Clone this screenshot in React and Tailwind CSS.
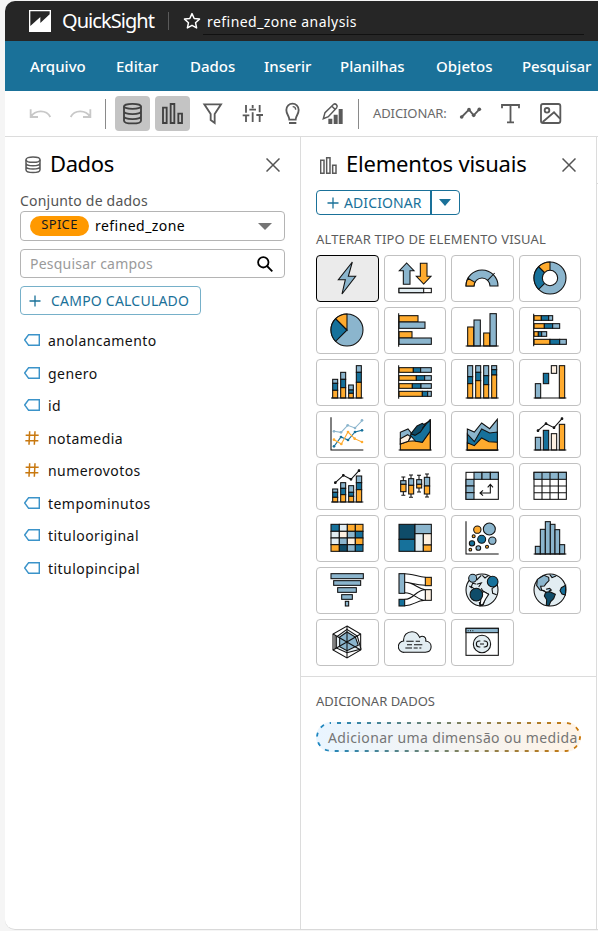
import React from "react";

const L = "#8bb5cd";
const M = "#16719b";
const O = "#ffab2e";
const P = "#e2edf2";
const C = "#fdf0e1";
const D = "#0f4c69";
const K = "#111";

/* Rectangles given as [x, y, width, height, fill] */
const Rects = ({ r }) => r.map((a, i) => <rect key={i} x={a[0]} y={a[1]} width={a[2]} height={a[3]} fill={a[4]} />);
/* Circles given as [cx, cy, r, fill] */
const Dots = ({ c, ...p }) => c.map((a, i) => <circle key={i} cx={a[0]} cy={a[1]} r={a[2]} fill={a[3]} {...p} />);

const visuals = [
  { id: "auto", vb: "60 33 102 102", art: <path d="M127 36L85 89h21l-10 43 41-53h-22z" fill={L} /> },
  {
    id: "kpi", vb: "264 33 102 102", art: (
      <>
        <path d="M290 39l22 23h-12v41h-20V62h-12z" fill={L} />
        <path d="M331 40h20v39h12l-22 23-22-23h12z" fill={O} />
        <rect x="267" y="115" width="97" height="13" fill="#fff" />
        <rect x="267" y="115" width="74" height="13" fill={P} />
      </>
    ),
  },
  {
    id: "gauge", vb: "57 33 102 102", art: (
      <>
        <path d="M60 108A48 48 0 0 1 156 108H132A24 24 0 0 0 84 108Z" fill={L} />
        <path d="M60 108A48 48 0 0 1 66 85L87 97A24 24 0 0 0 84 108Z" fill={O} />
        <path d="M124 92l22-23" />
      </>
    ),
  },
  {
    id: "donut", vb: "261 33 102 102", art: (
      <>
        <circle cx="312" cy="84" r="48" fill={L} />
        <path d="M312 84L278 118A48 48 0 0 1 278 50Z" fill={M} />
        <path d="M312 84L278 50A48 48 0 0 1 312 36Z" fill={O} />
        <circle cx="312" cy="84" r="23" fill="#fff" />
      </>
    ),
  },
  {
    id: "pie", vb: "60 189 102 102", art: (
      <>
        <circle cx="111" cy="240" r="48" fill={L} />
        <path d="M111 240L77 274A48 48 0 0 1 77 206Z" fill={M} />
        <path d="M111 240L77 206A48 48 0 0 1 111 192Z" fill={O} />
      </>
    ),
  },
  {
    id: "hbar", vb: "264 189 102 102", art: (
      <>
        <Rects r={[[267, 197, 57, 19, O], [267, 216, 78, 19, L], [267, 245, 39, 19, O], [267, 264, 97, 19, L]]} />
        <path d="M266 190v100" />
      </>
    ),
  },
  {
    id: "vbar", vb: "57 189 102 102", art: (
      <>
        <Rects r={[[65, 231, 18, 57, O], [84, 210, 19, 78, L], [113, 249, 18, 39, O], [132, 191, 19, 97, L]]} />
        <path d="M59 288h99" />
      </>
    ),
  },
  {
    id: "hstack", vb: "261 189 102 102", art: (
      <>
        <Rects r={[
          [264, 197, 22, 14, O], [286, 197, 22, 14, M], [308, 197, 12, 14, L],
          [264, 221, 31, 14, O], [295, 221, 25, 14, M], [320, 221, 21, 14, L],
          [264, 245, 13, 14, O], [277, 245, 10, 14, M], [287, 245, 15, 14, L],
          [264, 268, 48, 15, O], [312, 268, 29, 15, M], [341, 268, 20, 15, L]]} />
        <path d="M263 191v98" />
      </>
    ),
  },
  {
    id: "vstack", vb: "60 345 102 102", art: (
      <>
        <Rects r={[
          [68, 388, 15, 12, L], [68, 400, 15, 21, M], [68, 421, 15, 23, O],
          [92, 367, 15, 21, L], [92, 388, 15, 25, M], [92, 413, 15, 31, O],
          [116, 405, 14, 15, L], [116, 420, 14, 10, M], [116, 430, 14, 14, O],
          [139, 347, 15, 20, L], [139, 367, 15, 30, M], [139, 397, 15, 47, O]]} />
        <path d="M63 444h97" />
      </>
    ),
  },
  {
    id: "hstack100", vb: "264 345 102 102", art: (
      <>
        <Rects r={[
          [267, 353, 43, 14, O], [310, 353, 22, 14, M], [332, 353, 32, 14, L],
          [267, 377, 52, 14, O], [319, 377, 25, 14, M], [344, 377, 20, 14, L],
          [267, 401, 40, 14, O], [307, 401, 26, 14, M], [333, 401, 31, 14, L],
          [267, 424, 70, 15, O], [337, 424, 16, 15, M], [353, 424, 11, 15, L]]} />
        <path d="M266 346v100" />
      </>
    ),
  },
  {
    id: "vstack100", vb: "57 345 102 102", art: (
      <>
        <Rects r={[
          [65, 347, 15, 33, L], [65, 380, 15, 21, M], [65, 401, 15, 43, O],
          [89, 347, 15, 20, L], [89, 367, 15, 25, M], [89, 392, 15, 52, O],
          [113, 347, 15, 30, L], [113, 377, 15, 27, M], [113, 404, 15, 40, O],
          [137, 347, 15, 12, L], [137, 359, 15, 16, M], [137, 375, 15, 69, O]]} />
        <path d="M59 444h99" />
      </>
    ),
  },
  {
    id: "waterfall", vb: "261 345 102 102", art: (
      <>
        <Rects r={[[268, 401, 16, 43, L], [292, 370, 16, 31, M], [316, 347, 16, 23, C], [340, 347, 16, 97, O]]} />
        <path d="M263 444h98" />
      </>
    ),
  },
  {
    id: "line", vb: "60 33 102 102", art: (
      <>
        <path d="M63 34v98h97" />
        <path d="M72 76l21 3 20-21 22 8 22-23" stroke={L} />
        <path d="M72 121l21-28 21 9 21-24 21-5" stroke={M} />
        <path d="M72 101l22 13 20-36 20 20 22 10" stroke={O} />
        <Dots stroke="none" c={[[72, 76, 4, L], [93, 79, 4, L], [113, 58, 4, L], [135, 66, 4, L], [156, 43, 4, L],
          [72, 121, 4, M], [93, 93, 4, M], [114, 102, 4, M], [135, 78, 4, M], [156, 73, 4, M],
          [72, 101, 4, O], [94, 114, 4, O], [114, 78, 4, O], [134, 98, 4, O], [156, 108, 4, O]]} />
      </>
    ),
  },
  {
    id: "area", vb: "264 33 102 102", art: (
      <>
        <path d="M271 114l24-8 22-2 20 4 24-33v57h-90z" fill={O} />
        <path d="M271 79l23-10 14 17-13 18-24 10z" fill={L} />
        <path d="M271 98l22-12 8 6-6 14-24 8z" fill={C} />
        <path d="M301 88l16-21 20-9 24-14v31l-24 34-20-3z" fill={M} />
        <path d="M303 83l18-23 16-8 8 6-14 20-16 10z" fill={D} />
        <path d="M361 39v93M266 132h99M337 67l24-27" />
      </>
    ),
  },
  {
    id: "stackarea", vb: "57 33 102 102", art: (
      <>
        <path d="M64 69l21 9 22-27 24 17 23-28v92H64z" fill={L} />
        <path d="M64 84l21 23 22-38 24 12 23-3v54H64z" fill={M} />
        <path d="M64 110l21 9 22-23 22 11 25 2v23H64z" fill={O} />
        <path d="M59 132h99" />
      </>
    ),
  },
  {
    id: "combo", vb: "261 33 102 102", art: (
      <>
        <Rects r={[[268, 94, 16, 38, L], [292, 73, 16, 59, M], [316, 83, 16, 49, C], [340, 55, 16, 77, O]]} />
        <path d="M263 132h98M276 74l24-21 24 12 24-27" />
        <Dots c={[[276, 74, 2.5, K], [300, 53, 2.5, K], [324, 65, 2.5, K], [348, 38, 2.5, K]]} />
      </>
    ),
  },
  {
    id: "combostack", vb: "60 189 102 102", art: (
      <>
        <Rects r={[
          [68, 249, 15, 10, L], [68, 259, 15, 15, M], [68, 274, 15, 14, O],
          [92, 230, 15, 17, L], [92, 247, 15, 19, M], [92, 266, 15, 22, O],
          [116, 239, 15, 20, L], [116, 259, 15, 12, M], [116, 271, 15, 17, O],
          [139, 210, 16, 20, L], [139, 230, 16, 21, M], [139, 251, 16, 37, O]]} />
        <path d="M63 288h97M76 230l24-22 23 12 24-26" />
        <Dots c={[[76, 230, 2.5, K], [100, 208, 2.5, K], [123, 220, 2.5, K], [147, 194, 2.5, K]]} />
      </>
    ),
  },
  {
    id: "box", vb: "264 189 102 102", art: (
      <>
        <path d="M280 213v55M274 213h12M274 268h12M303 207v67M297 207h12M297 274h12M327 208v50M321 208h12M321 258h12M351 204v69M345 204h12M345 273h12" />
        <Rects r={[
          [272, 224, 16, 11, L], [272, 235, 16, 22, O],
          [296, 218, 15, 20, L], [296, 238, 15, 26, O],
          [320, 221, 15, 14, L], [320, 235, 15, 11, O],
          [343, 214, 16, 26, L], [343, 240, 16, 24, O]]} />
      </>
    ),
  },
  {
    id: "pivot", vb: "57 189 102 102", art: (
      <>
        <rect x="60" y="199" width="97" height="81" fill="#fff" />
        <Rects r={[[84, 199, 24, 21, L], [108, 199, 25, 21, L], [133, 199, 24, 21, L], [60, 220, 24, 20, L], [60, 240, 24, 20, L], [60, 260, 24, 20, L]]} />
        <path d="M133 237v24h-30M111 253l-9 8 9 8M125 244l8-9 8 9" />
      </>
    ),
  },
  {
    id: "table", vb: "261 189 102 102", art: (
      <>
        <rect x="264" y="199" width="97" height="81" fill="#fff" />
        <rect x="264" y="199" width="97" height="21" fill={L} />
        <path d="M264 240h97M264 260h97M288 199v81M312 199v81M337 199v81" />
      </>
    ),
  },
  {
    id: "heat", vb: "60 345 102 102", art: (
      <Rects r={[
        [63, 355, 25, 21, M], [88, 355, 24, 21, P], [112, 355, 24, 21, O], [136, 355, 23, 21, O],
        [63, 376, 25, 20, P], [88, 376, 24, 20, C], [112, 376, 24, 20, L], [136, 376, 23, 20, M],
        [63, 396, 25, 20, P], [88, 396, 24, 20, L], [112, 396, 24, 20, C], [136, 396, 23, 20, O],
        [63, 416, 25, 20, O], [88, 416, 24, 20, D], [112, 416, 24, 20, L], [136, 416, 23, 20, M]]} />
    ),
  },
  {
    id: "tree", vb: "264 345 102 102", art: (
      <Rects r={[[267, 355, 48, 45, D], [267, 400, 48, 36, M], [315, 355, 49, 28, L], [315, 383, 25, 53, P], [340, 383, 24, 34, C], [340, 417, 24, 19, O]]} />
    ),
  },
  {
    id: "scatter", vb: "57 345 102 102", art: (
      <>
        <path d="M60 346v98h98" />
        <Dots c={[[94, 371, 11, O], [130, 369, 18, L], [83, 391, 4.5, O], [107, 400, 12, M], [139, 404, 11, L], [78, 412, 8, M], [97, 426, 7, L], [123, 422, 4.5, O], [73, 431, 4, O]]} />
      </>
    ),
  },
  {
    id: "hist", vb: "261 345 102 102", art: (
      <>
        <Rects r={[[268, 421, 15, 23, L], [283, 370, 15, 74, L], [298, 347, 15, 97, L], [313, 355, 14, 89, L], [327, 371, 14, 73, L], [341, 416, 15, 28, L]]} />
        <path d="M263 444h98" />
      </>
    ),
  },
  {
    id: "funnel", vb: "60 39 102 102", art: <Rects r={[[63, 41, 97, 15, L], [71, 62, 81, 14, L], [83, 83, 56, 14, L], [95, 104, 32, 14, L], [106, 124, 10, 14, L]]} />,
  },
  {
    id: "sankey", vb: "264 39 102 102", art: (
      <>
        <path d="M284 41c22 0 40 9 62 11M284 67c20 0 30 9 62 9M284 67c30 0 38 20 62 22M284 98c30 0 38 23 62 23M284 118c30 0 32-29 62-29M284 137c30 0 30-15 62-16" />
        <Rects r={[[267, 41, 17, 59, L], [267, 118, 17, 20, M], [346, 52, 18, 25, O], [346, 89, 18, 32, C]]} />
      </>
    ),
  },
  {
    id: "mappoints", vb: "57 39 102 102", art: (
      <>
        <circle cx="108" cy="90" r="48" fill={P} />
        <path d="M92 60l14-14M109 46l8 8 10-7M84 86l-8-6 4-10 10 2M92 73l14-4-8 12M110 93l16 9-8 12-6 20-10 4-2-12M110 93l-4-8M152 76l-14 10 2 14 12 4M70 78l8 6M128 102l-10-4" fill="none" />
        <path d="M112 94l16 9-9 14-10 19-6-3 2-24z" fill="#fff" />
        <Dots c={[[80, 55, 12, L], [140, 65, 16, M], [91, 104, 19, D]]} />
      </>
    ),
  },
  {
    id: "map", vb: "261 39 102 102", art: (
      <>
        <circle cx="312" cy="90" r="48" fill={P} />
        <path d="M274 58l20-12 14 6 1 10-9 9-5 7-11 1 3 11 9 3-14-3-10-13z" fill={L} />
        <path d="M299 97l12-2 17 8-5 13-9 9-5 12-8-1 1-17-7-11z" fill={D} />
        <path d="M359 76l-13 7-4 9 6 10 10 3z" fill={M} />
        <path d="M311 43l7 10 12-5M300 88l11-3 5 5-7 3M290 91l13 7" fill={L} />
      </>
    ),
  },
  {
    id: "radar", vb: "60 195 102 102", art: (
      <>
        <path d="M111 198l41 24v48l-41 24-42-24v-48z" fill="#fff" />
        <path d="M111 208l31 20 11 39-42 11-32-14v-33z" fill={P} />
        <path d="M111 216l25 15 9 25-34 16-22-12v-29z" fill={L} />
        <path d="M111 198v96M69 222l83 48M152 222l-83 48M75 225v42" />
      </>
    ),
  },
  {
    id: "cloud", vb: "264 195 102 102", art: (
      <>
        <path d="M283 277a17 17 0 0 1-2-34c-2-18 11-28 25-28 12 0 19 7 23 17 9-8 21 0 18 11 22 2 22 33-1 34z" fill={P} />
        <path d="M289 244h22M317 244h13M291 254h15M312 254h25M286 264h20M311 264h12M328 264h6" />
      </>
    ),
  },
  {
    id: "custom", vb: "57 195 102 102", art: (
      <>
        <rect x="60" y="205" width="97" height="81" fill="#fff" />
        <rect x="60" y="205" width="97" height="13" fill={L} />
        <path d="M65 212h3M72 212h3M79 212h3" />
        <circle cx="108" cy="252" r="26" fill={P} />
        <path d="M103 243h-3a9 9 0 0 0 0 18h3M113 243h3a9 9 0 0 1 0 18h-3M102 252h12" />
      </>
    ),
  },
];

const Tile = ({ v, first }) => (
  <button className={`flex h-[47px] items-center justify-center rounded-[4px] border ${first ? "border-black bg-[#ebebeb]" : "border-[#c1c1c1] bg-white"}`}>
    <svg viewBox={v.vb} className="mb-px h-[34px] w-[34px] shrink-0" fill="none" stroke={K} strokeWidth="3.2">{v.art}</svg>
  </button>
);

const Tool = ({ vb, active, muted, children }) => (
  <button className={`h-[35px] w-[35px] shrink-0 rounded-[4px] ${active ? "bg-[#c4c4c4] text-[#404040]" : muted ? "text-[#c8c8c8]" : "text-[#5a5a5a]"}`}>
    <svg viewBox={vb} className="h-[35px] w-[35px]" fill="none" stroke="currentColor" strokeWidth="5.5">{children}</svg>
  </button>
);

const Close = () => (
  <svg viewBox="0 0 14 14" className="h-[14px] w-[14px]" stroke="#545454" strokeWidth="1.5"><path d="M.5 .5l13 13M13.5 .5l-13 13" /></svg>
);

const Plus = () => (
  <svg viewBox="0 0 12 12" className="h-[12px] w-[12px] shrink-0" stroke="currentColor" strokeWidth="1.3"><path d="M6 .5v11M.5 6h11" /></svg>
);

const menu = [
  ["Arquivo", "w-[86px]"], ["Editar", "w-[74px]"], ["Dados", "w-[74px]"], ["Inserir", "w-[76px]"],
  ["Planilhas", "w-[96px]"], ["Objetos", "w-[86px] tracking-[0.1px]"], ["Pesquisar", "w-[76px] tracking-[-0.1px]"],
];

const fields = [
  ["anolancamento", 0], ["genero", 0], ["id", 0], ["notamedia", 1],
  ["numerovotos", 1], ["tempominutos", 0], ["titulooriginal", 0], ["titulopincipal", 0],
];

export default function App() {
  return (
    <div className="h-[931px] w-[598px] overflow-hidden bg-[#f5f5f5] pl-[5px] pt-px font-['Noto_Sans',sans-serif]">
      <div className="flex h-[929px] flex-col overflow-hidden rounded-l-[10px] border-b border-[#d9d9d9] bg-white">
        <header className="flex h-[40px] shrink-0 items-center bg-[#262626] pl-[24px] text-white">
          <svg viewBox="0 0 66 66" className="h-[22px] w-[22px]">
            <path d="M0 0h66v66H0z" fill="#fff" />
            <path d="M4 4h58v9L34 39V21L4 48z" fill="#262626" />
          </svg>
          <span className="ml-[11px] w-[95px] whitespace-nowrap text-[20px] leading-[42px] tracking-[-0.95px]">QuickSight</span>
          <span className="ml-[11px] h-[18px] w-px bg-[#5a5a5a]" />
          <svg viewBox="0 0 18 18" className="ml-[14px] h-[18px] w-[18px]" fill="none" stroke="#fff" strokeWidth="1.5" strokeLinejoin="round">
            <path d="M9 1.6l2.2 4.9 5.3.6-4 3.6 1.1 5.2L9 13.3l-4.6 2.6 1.1-5.2-4-3.6 5.3-.6z" />
          </svg>
          <div className="ml-[2px] flex h-[40px] w-[381px] flex-col pt-[6px]">
            <div className="h-[28px] border-b border-[#111] pl-[4px]">
              <span className="block whitespace-nowrap text-[14px] leading-[29px] tracking-[0.45px]">refined_zone analysis</span>
            </div>
          </div>
        </header>

        <nav className="flex h-[50px] shrink-0 items-center bg-[#1a7199] pl-[25px] text-[15px] font-medium text-white">
          {menu.map(([t, w]) => <span key={t} className={`${w} shrink-0 whitespace-nowrap leading-[51px]`}>{t}</span>)}
        </nav>

        <div className="flex h-[46px] shrink-0 items-center border-b border-[#dcdcdc] pl-[18px]">
          <Tool vb="69 288 105 105" muted><path d="M92 328v23h22M93 350c12-20 46-22 58 1" /></Tool>
          <div className="w-[5px]" />
          <Tool vb="189 288 105 105" muted><path d="M271 328v23h-22M270 350c-12-20-46-22-58 1" /></Tool>
          <span className="ml-[7px] mr-[9px] h-[30px] w-px bg-[#8a8a8a]" />
          <Tool vb="345 288 105 105" active>
            <ellipse cx="397.500" cy="319" rx="25.500" ry="7.500" />
            <path d="M372 319v43c0 11 51 11 51 0v-43M372 334c0 11 51 11 51 0M372 349c0 11 51 11 51 0" />
          </Tool>
          <div className="w-[5px]" />
          <Tool vb="465 288 105 105" active><path d="M489 323h11v46h-11zM512 312h11v57h-11zM535 341h11v28h-11z" /></Tool>
          <div className="w-[5px]" />
          <Tool vb="585 288 105 105"><path d="M613 313h50l-19 29v27l-12-9v-18z" /></Tool>
          <div className="w-[5px]" />
          <Tool vb="705 288 105 105"><path d="M738 315v23M728 346h20M738 346v20M758 315v10M748 329h20M758 337v29M779 315v22M769 345h20M779 345v21" /></Tool>
          <div className="w-[5px]" />
          <Tool vb="825 288 105 105">
            <path d="M868 359c0-12-9-15-9-29 0-12 9-19 18.500-19s18.500 7 18.500 19c0 14-9 17-9 29zM867 369h22" />
            <path d="M878 320c6 0 9 4 9 9" strokeWidth="4" />
          </Tool>
          <div className="w-[5px]" />
          <Tool vb="51 288 105 105">
            <path d="M76 356l5-18 26-25c5-4 14 3 9 10l-25 27zM101 318l10 10" strokeWidth="4.500" />
            <path d="M91 356h12v16H91zM107 344h12v28h-12zM122 327h12v45h-12z" fill="currentColor" stroke="none" />
          </Tool>
          <span className="ml-[8px] mr-[14px] h-[30px] w-px bg-[#8a8a8a]" />
          <span className="w-[80px] whitespace-nowrap text-[13px] tracking-[-0.1px] text-[#6a6a6a]">ADICIONAR:</span>
          <Tool vb="465 288 105 105">
            <path d="M491 351l22-22 14 17 17-18" />
            <Dots stroke="none" c={[[491, 351, 5.5, "currentColor"], [513, 329, 5.5, "currentColor"], [527, 346, 5.5, "currentColor"], [544, 328, 5.5, "currentColor"]]} />
          </Tool>
          <div className="w-[5px]" />
          <Tool vb="585 288 105 105"><path d="M612 325v-10h51v10M637.500 315v51M627 367h21" /></Tool>
          <div className="w-[5px]" />
          <Tool vb="705 288 105 105">
            <rect x="729" y="312" width="58" height="57" rx="6" />
            <circle cx="747" cy="331" r="7" />
            <path d="M734 366l34-29 18 19" />
          </Tool>
        </div>

        <div className="flex min-h-0 flex-1">
          <section className="flex w-[295px] shrink-0 flex-col px-[15px]">
            <div className="flex h-[56px] items-center pl-[5px] pr-[5px]">
              <svg viewBox="0 0 48 54" className="h-[18px] w-[16px]" fill="none" stroke="#5a5a5a" strokeWidth="4.500">
                <ellipse cx="24" cy="11" rx="21" ry="8" />
                <path d="M3 11v30c0 11 42 11 42 0V11M3 21c0 11 42 11 42 0M3 31c0 11 42 11 42 0" />
              </svg>
              <h2 className="mb-[4px] ml-[9px] flex-1 text-[22px] leading-[52px] tracking-[-0.4px] text-black">Dados</h2>
              <Close />
            </div>
            <div className="h-[18px] text-[14px] leading-[16px] tracking-[0.2px] text-[#545454]">Conjunto de dados</div>
            <div className="flex h-[30px] items-center rounded-[4px] border border-[#b4b4b4] pl-[9px] pr-[12px]">
              <span className="h-[20px] w-[59px] rounded-full bg-[#ff9900] text-center text-[13px] leading-[17px] tracking-[0.3px] text-[#16191f]">SPICE</span>
              <span className="ml-[6px] flex-1 text-[14px] leading-[28px] tracking-[0.45px] text-black">refined_zone</span>
              <svg viewBox="0 0 14 7" className="h-[7px] w-[14px]"><path d="M0 0h14L7 7z" fill="#757575" /></svg>
            </div>
            <div className="mt-[8px] flex h-[29px] items-center rounded-[4px] border border-[#b4b4b4] pl-[9px] pr-[11px]">
              <span className="flex-1 text-[14px] leading-[27px] tracking-[0.22px] text-[#9a9a9a]">Pesquisar campos</span>
              <svg viewBox="0 0 16 16" className="h-[16px] w-[16px]" fill="none" stroke="#000" strokeWidth="1.800"><circle cx="6.300" cy="6.300" r="5.200" /><path d="M10 10l5.300 5.300" /></svg>
            </div>
            <button className="mt-[8px] flex h-[29px] w-[181px] items-center rounded-[4px] border border-[#76b0c9] pl-[8px] text-[#1a7199]">
              <Plus />
              <span className="ml-[10px] whitespace-nowrap text-[14px] leading-[27px] tracking-[0.22px]">CAMPO CALCULADO</span>
            </button>
            <ul className="mt-[9px]">
              {fields.map(([t, num]) => (
                <li key={t} className="flex h-[32.5px] items-center pl-[4px]">
                  {num ? (
                    <svg viewBox="0 0 48 42" className="h-[14px] w-[16px]" stroke="#c8780f" strokeWidth="4.500"><path d="M17 1l-2 40M33 1l-2 40M5 13h39M4 29h39" /></svg>
                  ) : (
                    <svg viewBox="0 0 48 36" className="h-[12px] w-[16px]" fill="none" stroke="#3b93c9" strokeWidth="4.500"><path d="M2 18L14 2h32v32H14z" /></svg>
                  )}
                  <span className="ml-[8px] mt-[2px] text-[14px] leading-[30px] tracking-[0.45px] text-[#111]">{t}</span>
                </li>
              ))}
            </ul>
          </section>

          <section className="flex w-[297px] shrink-0 flex-col border-x border-[#dcdcdc]">
            <div className="flex h-[540px] shrink-0 flex-col border-b border-[#dcdcdc] px-[15px]">
              <div className="flex h-[53px] items-center pl-[4px] pr-[5px] pt-[3px]">
                <svg viewBox="0 0 51 51" className="h-[17px] w-[17px]" fill="none" stroke="#5a5a5a" strokeWidth="4.500"><path d="M2 10h10v39H2zM20 2h10v47H20zM38 25h10v24H38z" /></svg>
                <h2 className="mb-[4px] ml-[9px] flex-1 whitespace-nowrap text-[22px] leading-[46px] tracking-[-0.2px] text-black">Elementos visuais</h2>
                <Close />
              </div>
              <button className="flex h-[25px] w-[144px] shrink-0 items-center rounded-[4px] border border-[#1a7199] pl-[10px] text-[#1a7199]">
                <Plus />
                <span className="ml-[5px] w-[86px] whitespace-nowrap text-left text-[14px] leading-[23px] tracking-[0.1px]">ADICIONAR</span>
                <span className="h-full w-[2px] bg-[#1a7199]" />
                <svg viewBox="0 0 12 7" className="ml-[7px] h-[7px] w-[12px]"><path d="M0 0h12L6 7z" fill="#1a7199" /></svg>
              </button>
              <div className="mt-[14px] h-[26px] whitespace-nowrap text-[13px] leading-[20px] tracking-[0.17px] text-[#5c5c5c]">ALTERAR TIPO DE ELEMENTO VISUAL</div>
              <div className="grid grid-cols-4 gap-[5px]">
                {visuals.map((v, i) => <Tile key={v.id} v={v} first={i === 0} />)}
              </div>
            </div>
            <div className="px-[15px] pt-[14px]">
              <div className="h-[31px] text-[13px] leading-[20px] text-[#5c5c5c]">ADICIONAR DADOS</div>
              <div className="relative h-[30px] w-[265px] overflow-hidden rounded-full bg-gradient-to-r from-[#e9f5ff] to-[#fff3e6]">
                <svg viewBox="0 0 265 30" className="absolute inset-0 h-[30px] w-[265px]" fill="none">
                  <defs>
                    <linearGradient id="edge" gradientUnits="userSpaceOnUse" x1="0" y1="0" x2="265" y2="0"><stop stopColor="#1e88c2" /><stop offset="1" stopColor="#cc7a0c" /></linearGradient>
                  </defs>
                  <rect x="1" y="1" width="263" height="28" rx="14" stroke="url(#edge)" strokeWidth="2" strokeDasharray="4 6" strokeDashoffset="4" />
                </svg>
                <span className="relative block whitespace-nowrap pl-[12px] text-[14px] leading-[31px] tracking-[0.36px] text-[#757575]">Adicionar uma dimensão ou medida</span>
              </div>
            </div>
          </section>
          <div className="mt-[46px] h-px flex-1 bg-[#dcdcdc]" />
        </div>
      </div>
    </div>
  );
}
